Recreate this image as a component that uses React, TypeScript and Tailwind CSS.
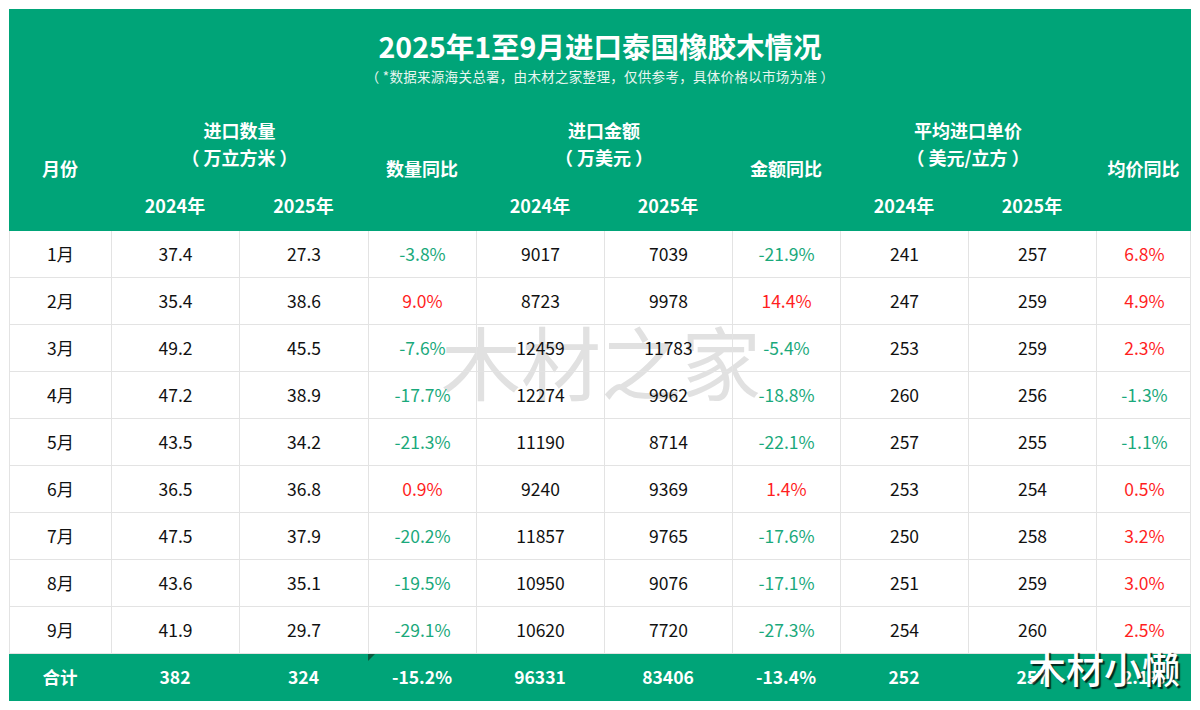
const font = { fontFamily: '"Noto Sans CJK SC", "Noto Sans", sans-serif' };

type Row = {
  m: string;
  q24: string;
  q25: string;
  qy: string;
  v24: string;
  v25: string;
  vy: string;
  p24: string;
  p25: string;
  py: string;
};

const rows: Row[] = [
  { m: "1月", q24: "37.4", q25: "27.3", qy: "-3.8%", v24: "9017", v25: "7039", vy: "-21.9%", p24: "241", p25: "257", py: "6.8%" },
  { m: "2月", q24: "35.4", q25: "38.6", qy: "9.0%", v24: "8723", v25: "9978", vy: "14.4%", p24: "247", p25: "259", py: "4.9%" },
  { m: "3月", q24: "49.2", q25: "45.5", qy: "-7.6%", v24: "12459", v25: "11783", vy: "-5.4%", p24: "253", p25: "259", py: "2.3%" },
  { m: "4月", q24: "47.2", q25: "38.9", qy: "-17.7%", v24: "12274", v25: "9962", vy: "-18.8%", p24: "260", p25: "256", py: "-1.3%" },
  { m: "5月", q24: "43.5", q25: "34.2", qy: "-21.3%", v24: "11190", v25: "8714", vy: "-22.1%", p24: "257", p25: "255", py: "-1.1%" },
  { m: "6月", q24: "36.5", q25: "36.8", qy: "0.9%", v24: "9240", v25: "9369", vy: "1.4%", p24: "253", p25: "254", py: "0.5%" },
  { m: "7月", q24: "47.5", q25: "37.9", qy: "-20.2%", v24: "11857", v25: "9765", vy: "-17.6%", p24: "250", p25: "258", py: "3.2%" },
  { m: "8月", q24: "43.6", q25: "35.1", qy: "-19.5%", v24: "10950", v25: "9076", vy: "-17.1%", p24: "251", p25: "259", py: "3.0%" },
  { m: "9月", q24: "41.9", q25: "29.7", qy: "-29.1%", v24: "10620", v25: "7720", vy: "-27.3%", p24: "254", p25: "260", py: "2.5%" },
];

const cols = "grid-cols-[102px_128px_129px_108px_128px_128px_108px_128px_128px_95px]";

function Pct({ v, last }: { v: string; last?: boolean }) {
  const neg = v.startsWith("-");
  return (
    <div className={`flex items-center justify-center ${last ? "" : "border-r border-[#e3e3e3]"} ${neg ? "text-[#1aa97b]" : "text-[#ff1f1f]"}`}>
      {v}
    </div>
  );
}

function Cell({ v }: { v: string }) {
  return <div className="flex items-center justify-center text-[#111] border-r border-[#e3e3e3]">{v}</div>;
}

export default function App() {
  return (
    <div className="w-[1200px] h-[710px] bg-white pt-[9px] pl-[9px] relative overflow-hidden" style={font}>
      <div className="w-[1182px] relative">
        {/* header */}
        <div className="bg-[#00a478] text-white pt-[19px] pb-[12px]">
          <div className="text-center text-[28.5px] leading-[36px] font-bold">2025年1至9月进口泰国橡胶木情况</div>
          <div className="text-center text-[13.5px] leading-[18px] mt-[3px] text-[#e8f6f0] tracking-[0.3px]">
            （ *数据来源海关总署，由木材之家整理，仅供参考，具体价格以市场为准 ）
          </div>
          <div className={`grid ${cols} grid-rows-[27px_27px_21px_27px] mt-[32px] text-[18px] font-bold`}>
            <div className="row-span-4 col-start-1 row-start-1 flex items-center justify-center">月份</div>
            <div className="col-start-2 col-span-2 row-start-1 flex items-center justify-center">进口数量</div>
            <div className="col-start-2 col-span-2 row-start-2 flex items-center justify-center">（ 万立方米 ）</div>
            <div className="col-start-2 row-start-4 flex items-center justify-center">2024年</div>
            <div className="col-start-3 row-start-4 flex items-center justify-center">2025年</div>
            <div className="row-span-4 col-start-4 row-start-1 flex items-center justify-center">数量同比</div>
            <div className="col-start-5 col-span-2 row-start-1 flex items-center justify-center">进口金额</div>
            <div className="col-start-5 col-span-2 row-start-2 flex items-center justify-center">（ 万美元 ）</div>
            <div className="col-start-5 row-start-4 flex items-center justify-center">2024年</div>
            <div className="col-start-6 row-start-4 flex items-center justify-center">2025年</div>
            <div className="row-span-4 col-start-7 row-start-1 flex items-center justify-center">金额同比</div>
            <div className="col-start-8 col-span-2 row-start-1 flex items-center justify-center">平均进口单价</div>
            <div className="col-start-8 col-span-2 row-start-2 flex items-center justify-center">（ 美元/立方 ）</div>
            <div className="col-start-8 row-start-4 flex items-center justify-center">2024年</div>
            <div className="col-start-9 row-start-4 flex items-center justify-center">2025年</div>
            <div className="row-span-4 col-start-10 row-start-1 flex items-center justify-center">均价同比</div>
          </div>
        </div>

        {/* body, watermark sits behind the figures */}
        <div className="relative border-l border-r border-[#e3e3e3] text-[17.5px]">
          <div className="absolute left-[431px] top-[83px] text-[80px] leading-[90px] text-[#dcdcdc] opacity-85 pointer-events-none whitespace-nowrap">
            木材之家
          </div>
          {rows.map((r) => (
            <div key={r.m} className={`relative grid ${cols} h-[47px] border-b border-[#e3e3e3]`}>
              <Cell v={r.m} />
              <Cell v={r.q24} />
              <Cell v={r.q25} />
              <Pct v={r.qy} />
              <Cell v={r.v24} />
              <Cell v={r.v25} />
              <Pct v={r.vy} />
              <Cell v={r.p24} />
              <Cell v={r.p25} />
              <Pct v={r.py} last />
            </div>
          ))}
        </div>

        {/* total */}
        <div className={`grid ${cols} h-[47px] bg-[#00a478] text-white font-bold text-[17.5px] relative`}>
          <div className="flex items-center justify-center">合计</div>
          <div className="flex items-center justify-center">382</div>
          <div className="flex items-center justify-center">324</div>
          <div className="flex items-center justify-center">-15.2%</div>
          <div className="flex items-center justify-center">96331</div>
          <div className="flex items-center justify-center">83406</div>
          <div className="flex items-center justify-center">-13.4%</div>
          <div className="flex items-center justify-center">252</div>
          <div className="flex items-center justify-center">257</div>
          <div className="flex items-center justify-center">2.1%</div>
          <div className="absolute left-[359px] top-0 w-0 h-0 border-t-[7px] border-t-[#0b5a3e] border-r-[7px] border-r-transparent" />
        </div>

        <div
          className="absolute left-[1019px] top-[633px] text-[38px] leading-[50px] text-white font-medium pointer-events-none whitespace-nowrap"
          style={{ textShadow: "2px 2px 1px rgba(0,0,0,0.75)" }}
        >
          木材小懒
        </div>
      </div>
    </div>
  );
}
